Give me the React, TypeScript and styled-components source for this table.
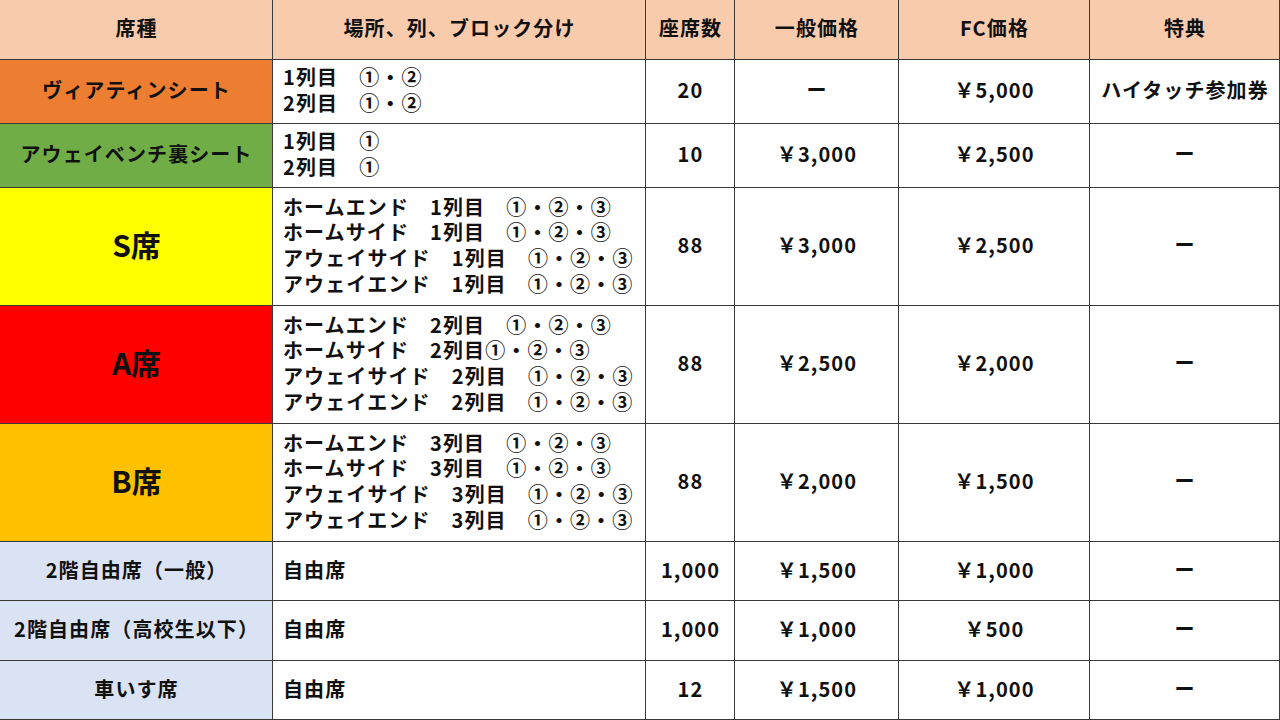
import React from "react";
import styled, { createGlobalStyle } from "styled-components";

const Global = createGlobalStyle`
  html, body { margin: 0; padding: 0; background: #fff; }
  body { font-family: "Noto Sans CJK JP", "Noto Sans", sans-serif; color: #111; }
`;

const Table = styled.div`
  display: grid;
  width: 1280px;
  height: 720px;
  grid-template-columns: 273px 373px 89px 164px 191px 190px;
  grid-template-rows: 60px 64px 64px 118px 118px 118px 59px 60px 59px;
  overflow: hidden;
`;

const Cell = styled.div<{ $bg?: string; $left?: boolean; $big?: boolean }>`
  box-sizing: border-box;
  border-right: 1px solid #3a3a3a;
  border-bottom: 1px solid #3a3a3a;
  background: ${(p) => p.$bg || "#fff"};
  display: flex;
  flex-direction: column;
  justify-content: center;
  align-items: ${(p) => (p.$left ? "flex-start" : "center")};
  padding: ${(p) => (p.$left ? "0 0 3px 10px" : "0 0 3px 1px")};
  font-size: ${(p) => (p.$big ? "30px" : "20px")};
  letter-spacing: ${(p) => (p.$big ? "0" : "1.1px")};
  font-weight: 700;
  line-height: 25.7px;
  white-space: pre;
  text-align: ${(p) => (p.$left ? "left" : "center")};
  color: #111;
`;

const HEAD = "#F8CBAD";
const BLUE = "#DAE3F3";

type Row = {
  name: string;
  bg: string;
  big?: boolean;
  place: string[];
  seats: string;
  general: string;
  fc: string;
  bonus: string;
};

const rows: Row[] = [
  { name: "ヴィアティンシート", bg: "#ED7D31", place: ["1列目　①・②", "2列目　①・②"], seats: "20", general: "ー", fc: "￥5,000", bonus: "ハイタッチ参加券" },
  { name: "アウェイベンチ裏シート", bg: "#70AD47", place: ["1列目　①", "2列目　①"], seats: "10", general: "￥3,000", fc: "￥2,500", bonus: "ー" },
  {
    name: "S席", bg: "#FFFF00", big: true,
    place: ["ホームエンド　1列目　①・②・③", "ホームサイド　1列目　①・②・③", "アウェイサイド　1列目　①・②・③", "アウェイエンド　1列目　①・②・③"],
    seats: "88", general: "￥3,000", fc: "￥2,500", bonus: "ー",
  },
  {
    name: "A席", bg: "#FF0000", big: true,
    place: ["ホームエンド　2列目　①・②・③", "ホームサイド　2列目①・②・③", "アウェイサイド　2列目　①・②・③", "アウェイエンド　2列目　①・②・③"],
    seats: "88", general: "￥2,500", fc: "￥2,000", bonus: "ー",
  },
  {
    name: "B席", bg: "#FFC000", big: true,
    place: ["ホームエンド　3列目　①・②・③", "ホームサイド　3列目　①・②・③", "アウェイサイド　3列目　①・②・③", "アウェイエンド　3列目　①・②・③"],
    seats: "88", general: "￥2,000", fc: "￥1,500", bonus: "ー",
  },
  { name: "2階自由席（一般）", bg: BLUE, place: ["自由席"], seats: "1,000", general: "￥1,500", fc: "￥1,000", bonus: "ー" },
  { name: "2階自由席（高校生以下）", bg: BLUE, place: ["自由席"], seats: "1,000", general: "￥1,000", fc: "￥500", bonus: "ー" },
  { name: "車いす席", bg: BLUE, place: ["自由席"], seats: "12", general: "￥1,500", fc: "￥1,000", bonus: "ー" },
];

const headers = ["席種", "場所、列、ブロック分け", "座席数", "一般価格", "FC価格", "特典"];

export default function App() {
  return (
    <>
      <Global />
      <Table>
        {headers.map((h) => (
          <Cell key={h} $bg={HEAD}>{h}</Cell>
        ))}
        {rows.map((r) => (
          <React.Fragment key={r.name}>
            <Cell $bg={r.bg} $big={r.big}>{r.name}</Cell>
            <Cell $left>
              {r.place.map((l, i) => (
                <span key={i}>{l}</span>
              ))}
            </Cell>
            <Cell>{r.seats}</Cell>
            <Cell>{r.general}</Cell>
            <Cell>{r.fc}</Cell>
            <Cell>{r.bonus}</Cell>
          </React.Fragment>
        ))}
      </Table>
    </>
  );
}
